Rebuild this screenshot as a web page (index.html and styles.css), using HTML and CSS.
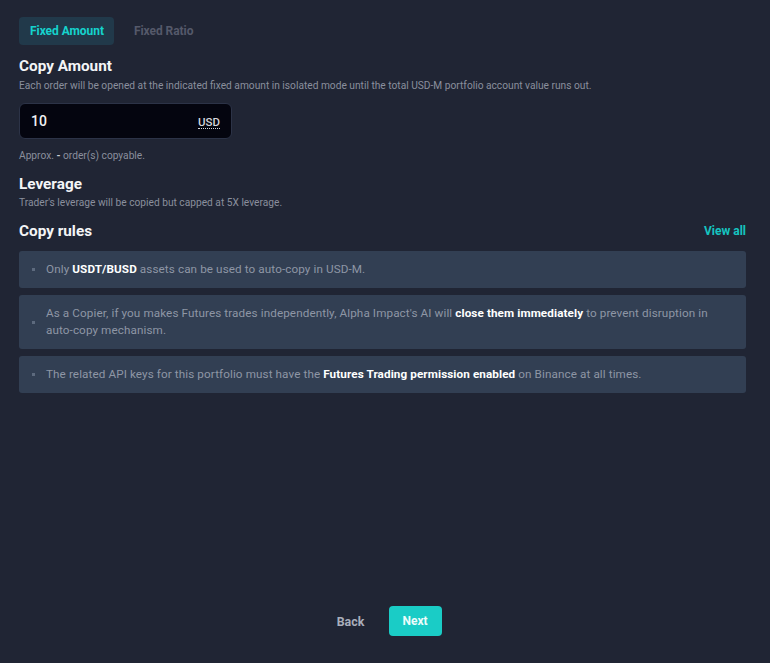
FILE: index.html
```html
<!DOCTYPE html>
<html lang="en">
<head>
<meta charset="utf-8">
<title>Copy settings</title>
<link rel="stylesheet" href="styles.css">
</head>
<body>
<main class="page">
  <div class="tabs">
    <div class="tab tab-active">Fixed Amount</div>
    <div class="tab">Fixed Ratio</div>
  </div>
  <h2 class="title">Copy Amount</h2>
  <p class="desc">Each order will be opened at the indicated fixed amount in isolated mode until the total USD-M portfolio account value runs out.</p>
  <div class="amount">
    <span class="amount-value">10</span>
    <span class="amount-unit">USD</span>
  </div>
  <p class="desc approx">Approx. <b class="dash">-</b> order(s) copyable.</p>
  <h2 class="title leverage">Leverage</h2>
  <p class="desc">Trader's leverage will be copied but capped at 5X leverage.</p>
  <div class="rules-head">
    <h2 class="title">Copy rules</h2>
    <a class="view-all">View all</a>
  </div>
  <ul class="rules">
    <li class="rule"><span class="bullet"></span><span>Only <strong>USDT/BUSD</strong> assets can be used to auto-copy in USD-M.</span></li>
    <li class="rule"><span class="bullet"></span><span>As a Copier, if you makes Futures trades independently, Alpha Impact's AI will <strong>close them immediately</strong> to prevent disruption in auto-copy mechanism.</span></li>
    <li class="rule"><span class="bullet"></span><span>The related API keys for this portfolio must have the <strong>Futures Trading permission enabled</strong> on Binance at all times.</span></li>
  </ul>
  <div class="actions">
    <button class="btn btn-back">Back</button>
    <button class="btn btn-next">Next</button>
  </div>
</main>
</body>
</html>
```
FILE: styles.css
```css
* { box-sizing: border-box; }
html, body { margin: 0; height: 100%; }
body {
  background: #202534;
  font-family: Roboto, "Liberation Sans", sans-serif;
  color: #fff;
  overflow: hidden;
}
.page {
  height: 663px;
  padding: 17px 24px 0 19px;
  display: flex;
  flex-direction: column;
}
.tabs { display: flex; height: 28px; }
.tab {
  padding: 0 10px 0 11px;
  line-height: 28px;
  font-size: 12px;
  letter-spacing: -0.05px;
  font-weight: 700;
  border-radius: 4px;
  color: #55596a;
  margin-right: 9px;
}
.tab-active { background: #21394a; color: #15d3cd; }
.title {
  margin: 0;
  font-size: 15.3px;
  line-height: 20px;
  font-weight: 700;
  color: #f4f5f7;
}
.tabs + .title { margin-top: 11px; }
.title + .desc { margin-top: 3px; }
.desc {
  margin: 0;
  font-size: 10.2px;
  line-height: 14px;
  color: #8a8f9d;
}
.amount {
  margin-top: 10px;
  width: 213px;
  height: 36px;
  background: #04050f;
  border: 1px solid #2c3347;
  border-radius: 6px;
  display: flex;
  align-items: center;
  justify-content: space-between;
  padding: 0 11px;
}
.amount-value { font-size: 14px; font-weight: 500; color: #f1f2f4; }
.amount-unit {
  font-size: 11.5px;
  font-weight: 500;
  color: #d5d7dc;
  border-bottom: 1px dotted #d5d7dc;
  line-height: 12px;
  margin-top: 3px;
}
.approx { margin-top: 10px; }
.dash { color: #c9ccd3; }
.leverage { margin-top: 11px; }
.leverage + .desc { margin-top: 2px; }
.rules-head {
  margin-top: 11px;
  display: flex;
  justify-content: space-between;
  align-items: center;
}
.view-all { font-size: 12px; font-weight: 700; color: #15c4c0; }
.rules {
  list-style: none;
  margin: 10px 0 0;
  padding: 0;
  display: flex;
  flex-direction: column;
  gap: 7px;
}
.rule {
  display: flex;
  align-items: center;
  gap: 11px;
  padding: 10px 30px 10px 13px;
  background: #323f53;
  border-radius: 3px;
  font-size: 11.7px;
  line-height: 17px;
  letter-spacing: 0.1px;
  color: #8e96a5;
}
.rule strong { color: #fff; font-weight: 700; }
.bullet {
  flex: none;
  width: 3px;
  height: 3px;
  background: #5d6a7e;
}
.actions {
  margin-top: auto;
  margin-bottom: 27px;
  padding-right: 12px;
  display: flex;
  justify-content: center;
  gap: 1px;
}
.btn {
  height: 30px;
  width: 53px;
  border: 0;
  border-radius: 4px;
  font-family: inherit;
  font-size: 12px;
  font-weight: 700;
  background: transparent;
  padding: 0;
}
.btn-back { color: #a9aebb; width: 76px; font-size: 12.4px; padding-left: 2px; }
.btn-next { background: #1accc6; color: #eefcfb; }
```
